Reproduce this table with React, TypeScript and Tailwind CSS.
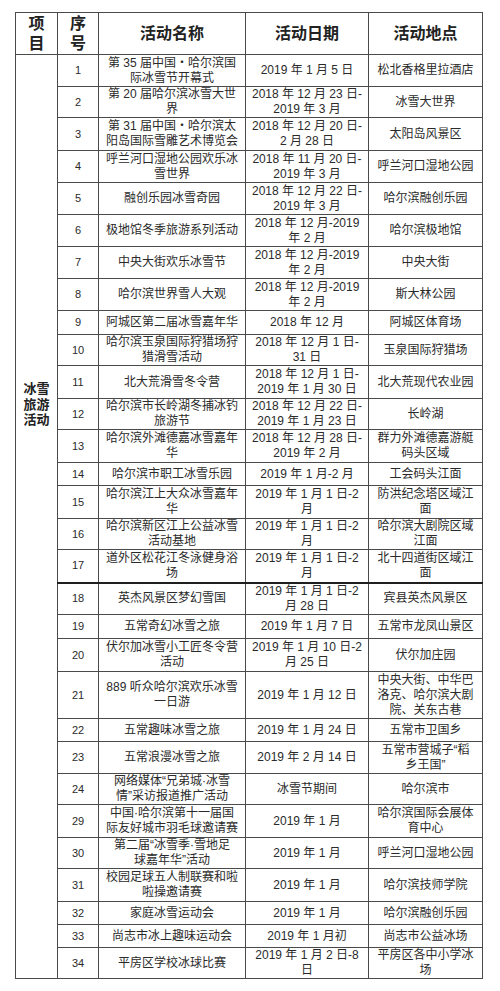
import React from "react";

type Row = {
  no: number;
  name: string[];
  date: string[];
  place: string[];
  h: string;
  thick?: boolean;
};

const rows: Row[] = [
  { no: 1, name: ["第 35 届中国・哈尔滨国", "际冰雪节开幕式"], date: ["2019 年 1 月 5 日"], place: ["松北香格里拉酒店"], h: "h-[32px]" },
  { no: 2, name: ["第 20 届哈尔滨冰雪大世", "界"], date: ["2018 年 12 月 23 日-", "2019 年 3 月"], place: ["冰雪大世界"], h: "h-[31px]" },
  { no: 3, name: ["第 31 届中国・哈尔滨太", "阳岛国际雪雕艺术博览会"], date: ["2018 年 12 月 20 日-", "2 月 28 日"], place: ["太阳岛风景区"], h: "h-[33px]" },
  { no: 4, name: ["呼兰河口湿地公园欢乐冰", "雪世界"], date: ["2018 年 11 月 20 日-", "2019 年 3 月"], place: ["呼兰河口湿地公园"], h: "h-[32px]" },
  { no: 5, name: ["融创乐园冰雪奇园"], date: ["2018 年 12 月 22 日-", "2019 年 3 月"], place: ["哈尔滨融创乐园"], h: "h-[32px]" },
  { no: 6, name: ["极地馆冬季旅游系列活动"], date: ["2018 年 12 月-2019", "年 2 月"], place: ["哈尔滨极地馆"], h: "h-[32px]" },
  { no: 7, name: ["中央大街欢乐冰雪节"], date: ["2018 年 12 月-2019", "年 2 月"], place: ["中央大街"], h: "h-[32px]" },
  { no: 8, name: ["哈尔滨世界雪人大观"], date: ["2018 年 12 月-2019", "年 2 月"], place: ["斯大林公园"], h: "h-[32px]" },
  { no: 9, name: ["阿城区第二届冰雪嘉年华"], date: ["2018 年 12 月"], place: ["阿城区体育场"], h: "h-[24px]" },
  { no: 10, name: ["哈尔滨玉泉国际狩猎场狩", "猎滑雪活动"], date: ["2018 年 12 月 1 日-", "31 日"], place: ["玉泉国际狩猎场"], h: "h-[31px]" },
  { no: 11, name: ["北大荒滑雪冬令营"], date: ["2018 年 12 月 1 日-", "2019 年 1 月 30 日"], place: ["北大荒现代农业园"], h: "h-[33px]" },
  { no: 12, name: ["哈尔滨市长岭湖冬捕冰钓", "旅游节"], date: ["2018 年 12 月 22 日-", "2019 年 1 月 23 日"], place: ["长岭湖"], h: "h-[31px]" },
  { no: 13, name: ["哈尔滨外滩德嘉冰雪嘉年", "华"], date: ["2018 年 12 月 28 日-", "2019 年 2 月"], place: ["群力外滩德嘉游艇", "码头区域"], h: "h-[33px]" },
  { no: 14, name: ["哈尔滨市职工冰雪乐园"], date: ["2019 年 1 月-2 月"], place: ["工会码头江面"], h: "h-[23px]" },
  { no: 15, name: ["哈尔滨江上大众冰雪嘉年", "华"], date: ["2019 年 1 月 1 日-2", "月"], place: ["防洪纪念塔区域江", "面"], h: "h-[33px]" },
  { no: 16, name: ["哈尔滨新区江上公益冰雪", "活动基地"], date: ["2019 年 1 月 1 日-2", "月"], place: ["哈尔滨大剧院区域", "江面"], h: "h-[31px]" },
  { no: 17, name: ["道外区松花江冬泳健身浴", "场"], date: ["2019 年 1 月 1 日-2", "月"], place: ["北十四道街区域江", "面"], h: "h-[33px]" },
  { no: 18, name: ["英杰风景区梦幻雪国"], date: ["2019 年 1 月 1 日-2", "月 28 日"], place: ["宾县英杰风景区"], h: "h-[32px]", thick: true },
  { no: 19, name: ["五常奇幻冰雪之旅"], date: ["2019 年 1 月 7 日"], place: ["五常市龙凤山景区"], h: "h-[24px]" },
  { no: 20, name: ["伏尔加冰雪小工匠冬令营", "活动"], date: ["2019 年 1 月 10 日-2", "月 25 日"], place: ["伏尔加庄园"], h: "h-[33px]" },
  { no: 21, name: ["889 听众哈尔滨欢乐冰雪", "一日游"], date: ["2019 年 1 月 12 日"], place: ["中央大街、中华巴", "洛克、哈尔滨大剧", "院、关东古巷"], h: "h-[47px]" },
  { no: 22, name: ["五常趣味冰雪之旅"], date: ["2019 年 1 月 24 日"], place: ["五常市卫国乡"], h: "h-[23px]" },
  { no: 23, name: ["五常浪漫冰雪之旅"], date: ["2019 年 2 月 14 日"], place: ["五常市营城子“稻", "乡王国”"], h: "h-[32px]" },
  { no: 24, name: ["网络媒体“兄弟城·冰雪", "情”采访报道推广活动"], date: ["冰雪节期间"], place: ["哈尔滨市"], h: "h-[31px]" },
  { no: 29, name: ["中国·哈尔滨第十一届国", "际友好城市羽毛球邀请赛"], date: ["2019 年 1 月"], place: ["哈尔滨国际会展体", "育中心"], h: "h-[33px]" },
  { no: 30, name: ["第二届“冰雪季·雪地足", "球嘉年华”活动"], date: ["2019 年 1 月"], place: ["呼兰河口湿地公园"], h: "h-[31px]" },
  { no: 31, name: ["校园足球五人制联赛和啦", "啦操邀请赛"], date: ["2019 年 1 月"], place: ["哈尔滨技师学院"], h: "h-[33px]" },
  { no: 32, name: ["家庭冰雪运动会"], date: ["2019 年 1 月"], place: ["哈尔滨融创乐园"], h: "h-[23px]" },
  { no: 33, name: ["尚志市冰上趣味运动会"], date: ["2019 年 1 月初"], place: ["尚志市公益冰场"], h: "h-[23px]" },
  { no: 34, name: ["平房区学校冰球比赛"], date: ["2019 年 1 月 2 日-8", "日"], place: ["平房区各中小学冰", "场"], h: "h-[31px]" },
];

const Lines = ({ lines }: { lines: string[] }) => (
  <>
    {lines.map((l, i) => (
      <div key={i} className="whitespace-nowrap">
        {l}
      </div>
    ))}
  </>
);

const App: React.FC = () => {
  const cell = "border border-[#4a4a4a] p-0 text-center align-middle";

  return (
    <div
      className="w-[500px] h-[991px] bg-white pt-[12px] pl-[15px] text-[#2a2a2a]"
      style={{ fontFamily: '"Liberation Sans", "Noto Sans CJK SC", sans-serif' }}
    >
      <table className="w-[467px] table-fixed border-collapse text-[12px] leading-[15px]">
        <colgroup>
          <col className="w-[42px]" />
          <col className="w-[41px]" />
          <col className="w-[147px]" />
          <col className="w-[123px]" />
          <col className="w-[114px]" />
        </colgroup>
        <thead>
          {/* header row */}
          <tr className="h-[42px] font-bold text-[16px] leading-[20px] text-[#222]">
            <th className={cell}>
              <div>项</div>
              <div>目</div>
            </th>
            <th className={cell}>
              <div>序</div>
              <div>号</div>
            </th>
            <th className={cell}>活动名称</th>
            <th className={cell}>活动日期</th>
            <th className={cell}>活动地点</th>
          </tr>
        </thead>
        <tbody>
          {rows.map((r, i) => {
            const edge = r.thick ? " border-t-2 border-t-[#1f1f1f]" : "";
            return (
              <tr key={r.no} className={r.h}>
                {i === 0 && (
                  <td
                    rowSpan={rows.length}
                    className="border border-[#4a4a4a] p-0 pt-[326px] text-center align-top text-[13px] leading-[15.5px] font-bold text-[#222]"
                  >
                    <div>冰雪</div>
                    <div>旅游</div>
                    <div>活动</div>
                  </td>
                )}
                <td className={cell + edge + " text-[11px]"}>{r.no}</td>
                <td className={cell + edge}>
                  <Lines lines={r.name} />
                </td>
                <td className={cell + edge}>
                  <Lines lines={r.date} />
                </td>
                <td className={cell + edge}>
                  <Lines lines={r.place} />
                </td>
              </tr>
            );
          })}
        </tbody>
      </table>
    </div>
  );
};

export default App;
